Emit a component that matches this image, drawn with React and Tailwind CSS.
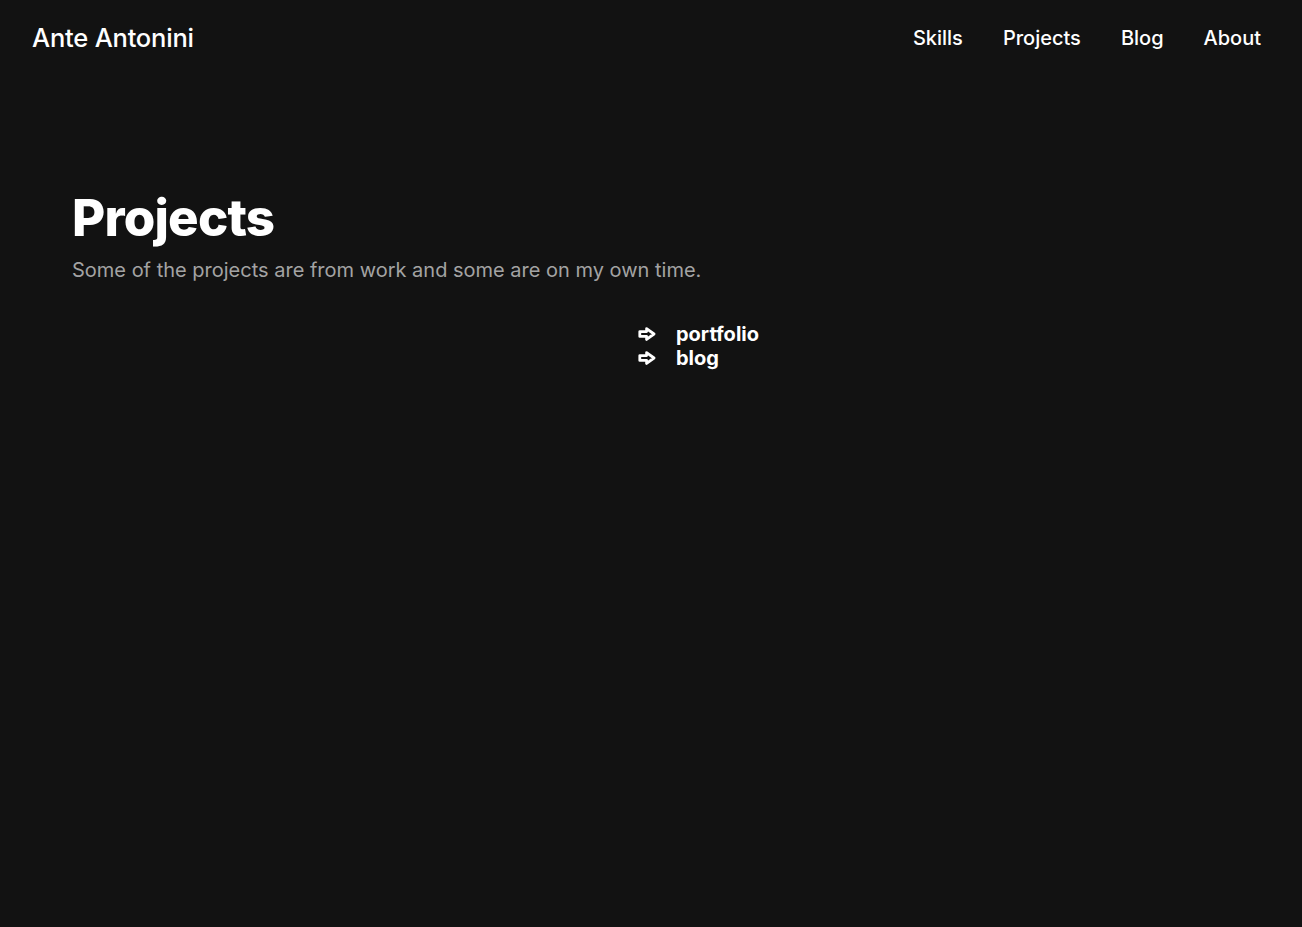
import React from 'react';

const links = ['portfolio', 'blog'];

function Arrow() {
    return (
        <svg width="18" height="14" viewBox="0 0 18 14" className="shrink-0">
            <path
                d="M1.8 4.6 H8.6 V1.6 L16 7 L8.6 12.4 V9.4 H1.8 Z"
                fill="#121212"
                stroke="#ffffff"
                strokeWidth="2.8"
                strokeLinejoin="round"
            />
        </svg>
    );
}

export default function App() {
    return (
        <div className="min-h-screen bg-[#121212] text-white" style={{ fontFamily: 'Inter, "Noto Sans", sans-serif' }}>
            <header className="flex items-center justify-between pl-8 pr-[41px] h-[76px]">
                <a className="text-[25.5px] font-medium tracking-[-0.2px]">Ante Antonini</a>
                <nav className="flex gap-10 text-[20px] font-medium">
                    <a>Skills</a>
                    <a>Projects</a>
                    <a>Blog</a>
                    <a>About</a>
                </nav>
            </header>

            <main className="px-[72px] pt-[116px]">
                <h1 className="text-[51px] font-extrabold leading-none tracking-[-0.8px]">Projects</h1>
                <p className="mt-[12px] text-[20px] text-[#a3a3a3]">
                    Some of the projects are from work and some are on my own time.
                </p>

                <ul className="mt-[37px] flex flex-col items-start pl-[566px]">
                    {links.map(l => (
                        <li key={l} className="flex items-center gap-[20px] text-[20px] font-bold leading-6">
                            <Arrow />
                            <a>{l}</a>
                        </li>
                    ))}
                </ul>
            </main>
        </div>
    );
}
